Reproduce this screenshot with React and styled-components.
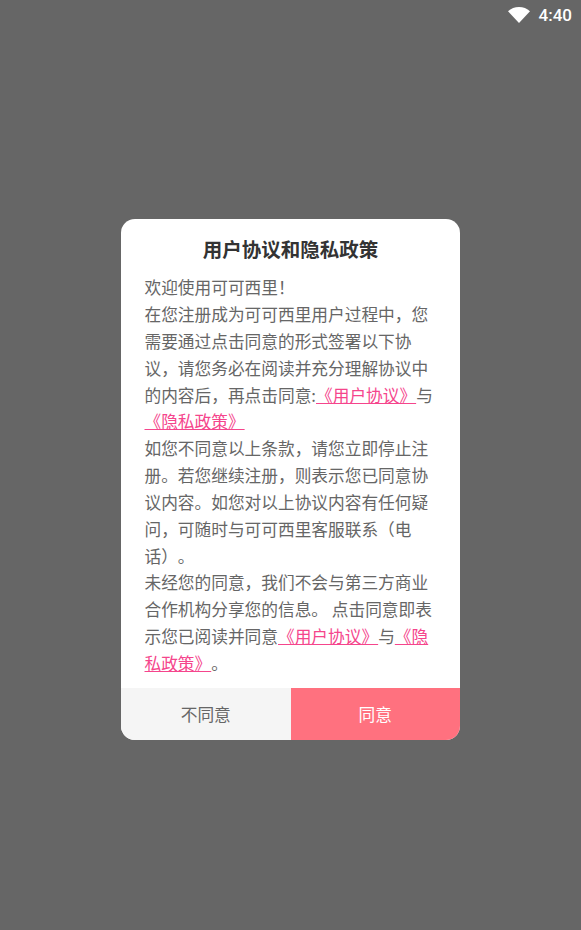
import React from 'react';
import styled, {createGlobalStyle} from 'styled-components';

const GlobalStyle = createGlobalStyle`
  html, body {
    margin: 0;
    padding: 0;
    height: 100%;
  }
  #root {
    height: 100%;
  }
`

const Screen = styled.div`
  width: 581px;
  height: 930px;
  background: #666666;
  display: flex;
  flex-direction: column;
  font-family: "Noto Sans CJK SC", "Roboto", sans-serif;
  overflow: hidden;
`

const StatusBar = styled.div`
  height: 29px;
  display: flex;
  justify-content: flex-end;
  align-items: center;
  gap: 9px;
  padding: 0 9px 0 0;
  color: #fff;
`

const Time = styled.span`
  font-family: Roboto, sans-serif;
  font-size: 17px;
  font-weight: 500;
`

const Overlay = styled.div`
  flex: 1;
  display: flex;
  justify-content: center;
  align-items: center;
`

const Dialog = styled.div`
  width: 339px;
  background: #fff;
  border-radius: 14px;
  overflow: hidden;
`

const Title = styled.h1`
  margin: 0;
  padding: 15px 0 10px;
  font-size: 19.5px;
  line-height: 30px;
  font-weight: 700;
  color: #333;
  text-align: center;
`

const Body = styled.div`
  padding: 0 23.5px 11px 23.5px;
  font-size: 16.7px;
  line-height: 26.85px;
  color: #666;
  text-spacing-trim: space-all;
`

const Line = styled.div``

const AgreementLink = styled.a`
  color: #f5458c;
  text-decoration: underline;
`

const Actions = styled.div`
  display: flex;
  height: 52px;
`

const ActionButton = styled.button`
  flex: ${(props) => (props.$primary ? '0 0 169.5px' : '1')};
  border: 0;
  padding: 0;
  font-family: inherit;
  font-size: 16.7px;
  color: ${(props) => (props.$primary ? '#fff' : '#666')};
  background: ${(props) => (props.$primary ? '#ff717f' : '#f5f5f5')};
`

function WifiIcon() {
  return (
    <svg width="22" height="16" viewBox="0 0 22 16">
      <path d="M0 4.2C3 1.6 6.8 0 11 0s8 1.6 11 4.2L11 16z" fill="#fff" />
    </svg>
  )
}

export default function App() {
  return (
    <Screen>
      <GlobalStyle />
      <StatusBar>
        <WifiIcon />
        <Time>4:40</Time>
      </StatusBar>
      <Overlay>
        <Dialog>
          <Title>用户协议和隐私政策</Title>
          <Body>
            <Line>欢迎使用可可西里！</Line>
            <Line>
              在您注册成为可可西里用户过程中，您需要通过点击同意的形式签署以下协议，请您务必在阅读并充分理解协议中的内容后，再点击同意:
              <AgreementLink>《用户协议》</AgreementLink>与<AgreementLink>《隐私政策》</AgreementLink>
            </Line>
            <Line>如您不同意以上条款，请您立即停止注册。若您继续注册，则表示您已同意协议内容。如您对以上协议内容有任何疑问，可随时与可可西里客服联系（电话）。</Line>
            <Line>
              未经您的同意，我们不会与第三方商业合作机构分享您的信息。 点击同意即表示您已阅读并同意
              <AgreementLink>《用户协议》</AgreementLink>与<AgreementLink>《隐私政策》</AgreementLink>。
            </Line>
          </Body>
          <Actions>
            <ActionButton>不同意</ActionButton>
            <ActionButton $primary>同意</ActionButton>
          </Actions>
        </Dialog>
      </Overlay>
    </Screen>
  )
}
